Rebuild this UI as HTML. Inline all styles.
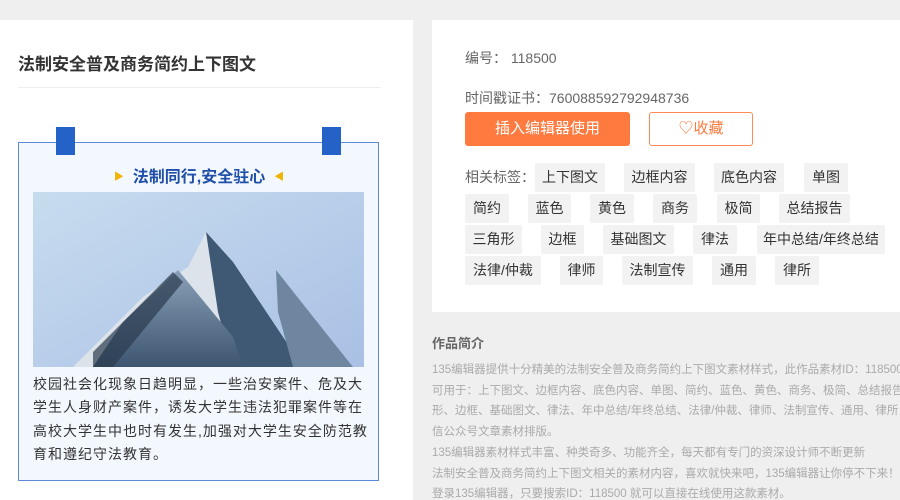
<!DOCTYPE html>
<html><head><meta charset="utf-8"><style>
*{margin:0;padding:0;box-sizing:border-box}
html,body{width:900px;height:500px;overflow:hidden}
body{background:#efefef;font-family:"Liberation Sans","Noto Sans CJK SC",sans-serif;position:relative}
.a{position:absolute}
.tag{position:absolute;height:29px;line-height:29px;background:#f2f2f2;color:#333;font-size:14px;text-align:center;border-radius:2px}
</style></head><body>
<div class="a" style="left:0;top:20px;width:413px;height:480px;background:#fff"></div>
<div class="a" style="left:18px;top:50px;font-size:17px;font-weight:bold;color:#333">法制安全普及商务简约上下图文</div>
<div class="a" style="left:18px;top:87px;width:363px;height:1px;background:#eee"></div>
<div class="a" style="left:18px;top:142px;width:361px;height:339px;background:#f3f7fe;border:1px solid #5b8bd8"></div>
<div class="a" style="left:56px;top:127px;width:19px;height:28px;background:#2462c8"></div>
<div class="a" style="left:322px;top:127px;width:19px;height:28px;background:#2462c8"></div>
<div class="a" style="left:0;width:398px;top:163px;text-align:center;font-size:16px;font-weight:bold;color:#1f4fa8"><span style="color:#f0b400;font-size:10px;vertical-align:2px">▶</span>&nbsp; 法制同行,安全驻心 &nbsp;<span style="color:#f0b400;font-size:10px;vertical-align:2px">◀</span></div>
<svg class="a" style="left:33px;top:192px" width="331" height="175" viewBox="0 0 331 175">
<defs><linearGradient id="s" x1="0" y1="0" x2="1" y2="1"><stop offset="0" stop-color="#c8dcef"/><stop offset="1" stop-color="#a9c0e4"/></linearGradient>
<linearGradient id="b" x1="0" y1="0" x2="0" y2="1"><stop offset="0" stop-color="#8aa0b8"/><stop offset="1" stop-color="#3d5570"/></linearGradient></defs>
<rect width="331" height="175" fill="url(#s)"/>
<polygon points="173,40 206,150 140,175 40,175 110,105 155,75" fill="#dde3ea"/>
<polygon points="173,40 200,70 240,130 270,175 200,175 185,120" fill="#3f5873"/>
<polygon points="243,78 300,150 320,175 260,175 245,120" fill="#6f86a0"/>
<polygon points="145,78 200,145 210,175 60,175 90,130" fill="url(#b)"/>
<polygon points="60,160 140,80 150,90 80,175 60,175" fill="#2a3a4d" opacity=".7"/>
</svg>
<div class="a" style="left:33px;top:373px;width:336px;font-size:14px;line-height:23.3px;color:#333;letter-spacing:1px">校园社会化现象日趋明显，一些治安案件、危及大学生人身财产案件，诱发大学生违法犯罪案件等在高校大学生中也时有发生,加强对大学生安全防范教育和遵纪守法教育。</div>

<div class="a" style="left:432px;top:20px;width:468px;height:292px;background:#fff"></div>
<div class="a" style="left:465px;top:48px;font-size:14px;color:#666">编号：&nbsp;118500</div>
<div class="a" style="left:465px;top:88px;font-size:14px;color:#666">时间戳证书：760088592792948736</div>
<div class="a" style="left:465px;top:112px;width:165px;height:34px;background:#ff7a3f;border-radius:3px;color:#fff;font-size:15px;line-height:34px;text-align:center">插入编辑器使用</div>
<div class="a" style="left:649px;top:112px;width:104px;height:34px;border:1px solid #ff8a55;border-radius:3px;color:#ff7a3f;font-size:15px;line-height:32px;text-align:center">♡收藏</div>
<div class="a" style="left:465px;top:167px;font-size:14px;color:#666">相关标签：</div>
<div class="tag" style="left:535px;top:163px;width:70px">上下图文</div>
<div class="tag" style="left:624px;top:163px;width:71px">边框内容</div>
<div class="tag" style="left:714px;top:163px;width:70px">底色内容</div>
<div class="tag" style="left:804px;top:163px;width:44px">单图</div>
<div class="tag" style="left:465px;top:194px;width:44px">简约</div>
<div class="tag" style="left:528px;top:194px;width:43px">蓝色</div>
<div class="tag" style="left:590px;top:194px;width:44px">黄色</div>
<div class="tag" style="left:653px;top:194px;width:44px">商务</div>
<div class="tag" style="left:717px;top:194px;width:43px">极简</div>
<div class="tag" style="left:779px;top:194px;width:71px">总结报告</div>
<div class="tag" style="left:465px;top:225px;width:57px">三角形</div>
<div class="tag" style="left:541px;top:225px;width:43px">边框</div>
<div class="tag" style="left:603px;top:225px;width:71px">基础图文</div>
<div class="tag" style="left:693px;top:225px;width:44px">律法</div>
<div class="tag" style="left:757px;top:225px;width:128px">年中总结/年终总结</div>
<div class="tag" style="left:465px;top:256px;width:76px">法律/仲裁</div>
<div class="tag" style="left:560px;top:256px;width:43px">律师</div>
<div class="tag" style="left:622px;top:256px;width:71px">法制宣传</div>
<div class="tag" style="left:712px;top:256px;width:44px">通用</div>
<div class="tag" style="left:775px;top:256px;width:44px">律所</div>

<div class="a" style="left:432px;top:333px;font-size:13px;font-weight:bold;color:#666">作品简介</div>
<div class="a" style="left:432px;top:360px;width:480px;font-size:11.5px;line-height:20.7px;color:#aaa;white-space:nowrap">135编辑器提供十分精美的法制安全普及商务简约上下图文素材样式，此作品素材ID：118500<br>可用于：上下图文、边框内容、底色内容、单图、简约、蓝色、黄色、商务、极简、总结报告<br>形、边框、基础图文、律法、年中总结/年终总结、法律/仲裁、律师、法制宣传、通用、律所<br>信公众号文章素材排版。<br>135编辑器素材样式丰富、种类奇多、功能齐全，每天都有专门的资深设计师不断更新<br>法制安全普及商务简约上下图文相关的素材内容，喜欢就快来吧，135编辑器让你停不下来！<br>登录135编辑器，只要搜索ID：118500 就可以直接在线使用这款素材。</div>
</body></html>
